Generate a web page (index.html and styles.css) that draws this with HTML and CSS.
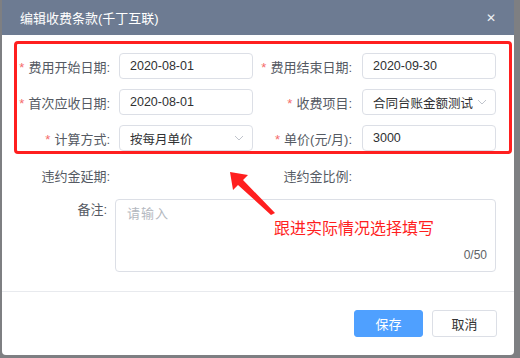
FILE: index.html
```html
<!DOCTYPE html>
<html lang="zh-CN">
  <head>
    <meta charset="UTF-8" />
    <meta name="viewport" content="width=device-width, initial-scale=1.0" />
    <title>编辑收费条款</title>
    <link rel="stylesheet" href="styles.css">
  </head>
  <body>
    <div class="dialog">
      <div class="dialog-header">
        <span class="dialog-title">编辑收费条款(千丁互联)</span>
        <span class="dialog-close">&#x2715;</span>
      </div>

      <div class="dialog-body">
        <div class="required-group">
          <div class="form-row">
            <label class="form-label"><i>*</i>费用开始日期:</label>
            <div class="form-input">2020-08-01</div>
            <label class="form-label"><i>*</i>费用结束日期:</label>
            <div class="form-input">2020-09-30</div>
          </div>
          <div class="form-row">
            <label class="form-label"><i>*</i>首次应收日期:</label>
            <div class="form-input">2020-08-01</div>
            <label class="form-label"><i>*</i>收费项目:</label>
            <div class="form-input select">
              <span>合同台账金额测试</span>
              <svg class="chevron" width="10" height="6" viewBox="0 0 10 6"><path d="M1 1l4 4 4-4" fill="none" stroke="#c0c4cc" stroke-width="1"/></svg>
            </div>
          </div>
          <div class="form-row">
            <label class="form-label"><i>*</i>计算方式:</label>
            <div class="form-input select">
              <span>按每月单价</span>
              <svg class="chevron" width="10" height="6" viewBox="0 0 10 6"><path d="M1 1l4 4 4-4" fill="none" stroke="#c0c4cc" stroke-width="1"/></svg>
            </div>
            <label class="form-label"><i>*</i>单价(元/月):</label>
            <div class="form-input">3000</div>
          </div>
        </div>

        <div class="form-row plain">
          <label class="form-label">违约金延期:</label>
          <div></div>
          <label class="form-label">违约金比例:</label>
          <div></div>
        </div>

        <div class="remark-row">
          <label class="remark-label">备注:</label>
          <div class="textarea">
            <span class="placeholder">请输入</span>
            <span class="counter">0/50</span>
          </div>
        </div>
      </div>

      <div class="dialog-footer">
        <button class="btn btn-primary">保存</button>
        <button class="btn">取消</button>
      </div>

      <!-- annotation -->
      <svg class="note-arrow" width="60" height="55" viewBox="220 165 60 55">
        <polygon points="230,172 248,175 243,180 275,213 271,215 238,185 233,190" fill="#ff1f1f"/>
      </svg>
      <div class="note-text">跟进实际情况选择填写</div>
    </div>
  </body>
</html>
```

FILE: styles.css
```css
* {
  margin: 0;
  padding: 0;
  box-sizing: border-box;
}

body {
  width: 520px;
  height: 358px;
  background: #7e7f82;
  font-family: "Liberation Sans", "Noto Sans CJK SC", sans-serif;
  font-size: 13px;
  color: #606266;
  overflow: hidden;
}

.dialog {
  position: relative;
  width: 512px;
  height: 355px;
  margin-left: 2px;
  background: #fff;
  border-radius: 0 0 4px 4px;
  display: flex;
  flex-direction: column;
}

.dialog-header {
  height: 35px;
  background: #6d7b92;
  display: flex;
  align-items: center;
  justify-content: space-between;
  padding: 0 18px 0 18px;
  color: #fff;
}

.dialog-title {
  font-size: 13px;
}

.dialog-close {
  font-size: 12px;
  font-family: "DejaVu Sans", sans-serif;
  color: #eef0f4;
}

.dialog-body {
  flex: 1;
}

.required-group {
  margin: 6px 2px 0 12px;
  border: 3px solid #ff1f1f;
  border-radius: 4px;
  padding: 9px 0 0;
  display: flex;
  flex-direction: column;
  gap: 10px;
}

.form-row {
  display: grid;
  grid-template-columns: 102px 134px 109px 134px;
  align-items: center;
  height: 26px;
}

.form-row.plain {
  margin: 8px 0 0 15px;
}

.form-label {
  text-align: right;
  padding-right: 9px;
  color: #555a63;
  white-space: nowrap;
}

.form-row .form-label:nth-child(3) {
  padding-right: 10px;
}

.form-label i {
  font-style: normal;
  color: #f56c6c;
  margin-right: 4px;
}

.form-input {
  height: 26px;
  border: 1px solid #dcdfe6;
  border-radius: 4px;
  padding: 0 6px 0 10px;
  display: flex;
  align-items: center;
  justify-content: space-between;
  font-size: 12.5px;
  color: #303133;
  white-space: nowrap;
  overflow: hidden;
}

.form-input.select span {
  overflow: hidden;
}

.chevron {
  flex-shrink: 0;
  margin: 0 2px 0 4px;
}

.remark-row {
  display: grid;
  grid-template-columns: 113px 381px;
  margin-top: 11px;
}

.remark-label {
  text-align: right;
  padding-right: 8px;
  line-height: 22px;
  color: #555a63;
}

.textarea {
  position: relative;
  height: 73px;
  border: 1px solid #dcdfe6;
  border-radius: 4px;
  padding: 3px 11px;
}

.placeholder {
  color: #b4b8c0;
  letter-spacing: 1px;
}

.counter {
  position: absolute;
  right: 8px;
  bottom: 9px;
  font-size: 12px;
  color: #606266;
}

.dialog-footer {
  border-top: 1px solid #e8eaee;
  height: 64px;
  padding: 18px 17px 0 0;
  display: flex;
  justify-content: flex-end;
  align-items: flex-start;
  gap: 9px;
}

.btn {
  height: 27px;
  width: 65px;
  border: 1px solid #dcdfe6;
  border-radius: 3px;
  background: #fff;
  color: #333;
  font-family: inherit;
  font-size: 13px;
}

.btn-primary {
  width: 69px;
  background: #4fa0ff;
  border-color: #4fa0ff;
  color: #fff;
}

.note-arrow {
  position: absolute;
  left: 218px;
  top: 165px;
}

.note-text {
  position: absolute;
  left: 272px;
  top: 219px;
  font-size: 16px;
  line-height: 20px;
  color: #ff1f1f;
}
```
